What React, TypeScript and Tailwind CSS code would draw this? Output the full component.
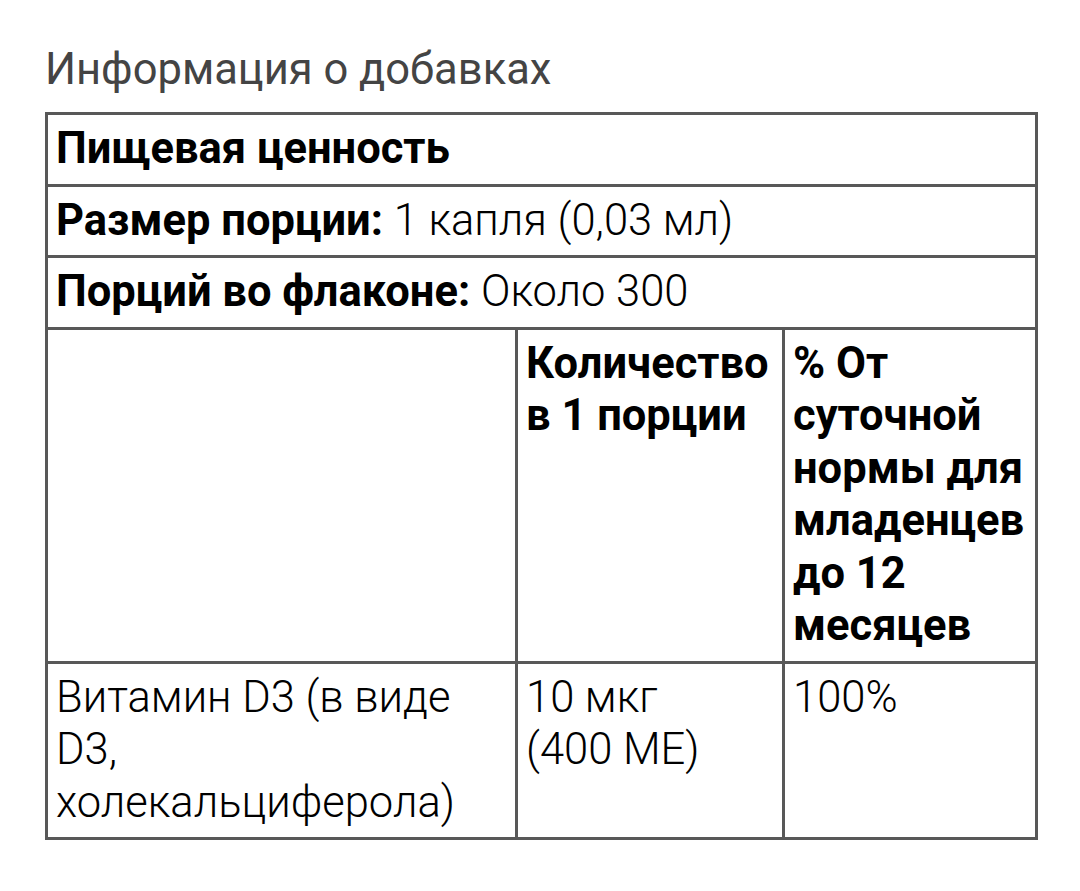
import React from 'react';

const cell = "border-[3px] border-[#585858] px-[8px] py-[8px] align-top";

export default function App() {
  return (
    <div className="min-h-screen bg-white pt-[44px] pl-[45px] text-[43.5px] leading-[52.5px] text-black" style={{ fontFamily: 'Roboto, "Noto Sans", sans-serif' }}>
      <h1 className="text-[43.5px] font-normal leading-[52px] text-[#444444] mb-[16px]">
        Информация о добавках
      </h1>
      <table className="w-[990px] table-fixed border-collapse">
        <colgroup>
          <col className="w-[470px]" />
          <col className="w-[267px]" />
          <col className="w-[253px]" />
        </colgroup>
        <tbody>
          <tr>
            <td colSpan={3} className={cell}>
              <span className="font-bold">Пищевая ценность</span>
            </td>
          </tr>
          <tr>
            <td colSpan={3} className={cell}>
              <span className="font-bold">Размер порции:</span>{' '}
              <span className="font-light">1 капля (0,03 мл)</span>
            </td>
          </tr>
          <tr>
            <td colSpan={3} className={cell}>
              <span className="font-bold">Порций во флаконе:</span>{' '}
              <span className="font-light">Около 300</span>
            </td>
          </tr>
          <tr>
            <td className={cell}></td>
            <td className={`${cell} font-bold`}>Количество в 1 порции</td>
            <td className={`${cell} font-bold`}>% От суточной нормы для младенцев до 12 месяцев</td>
          </tr>
          <tr>
            <td className={`${cell} font-light`}>Витамин D3 (в виде D3, холекальциферола)</td>
            <td className={`${cell} font-light`}>10 мкг (400&nbsp;МЕ)</td>
            <td className={`${cell} font-light`}>100%</td>
          </tr>
        </tbody>
      </table>
    </div>
  );
}
